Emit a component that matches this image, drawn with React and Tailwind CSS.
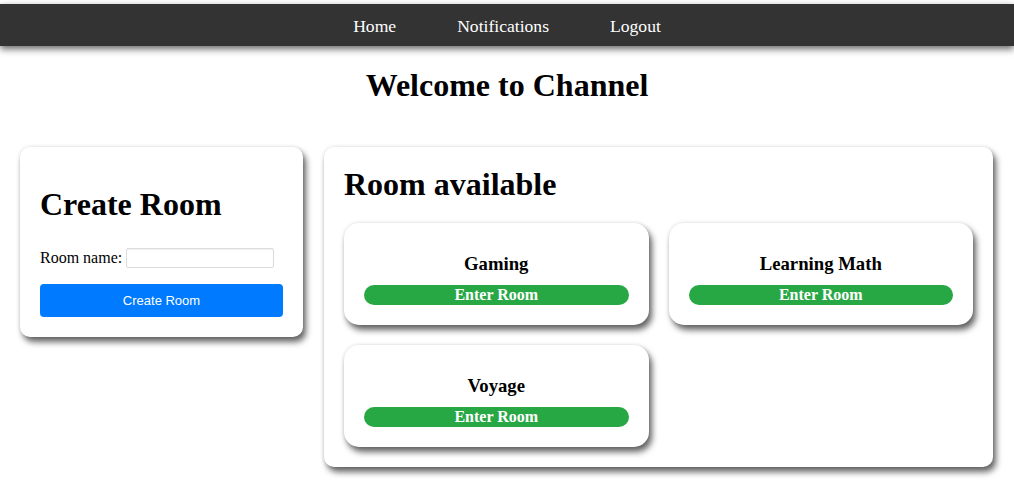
import React from "react";

const rooms = ["Gaming", "Learning Math", "Voyage"];

function RoomCard({ name }) {
  return (
    <div className="flex flex-col rounded-[15px] bg-white px-[20px] pt-[30px] pb-[20px] shadow-[0_0_4px_rgba(0,0,0,0.12),3px_5px_6px_rgba(0,0,0,0.6)]">
      <h3 className="mb-[10px] text-center text-[18.72px] font-bold leading-[22px] text-black">{name}</h3>
      <button className="h-[20px] w-full rounded-full bg-[#28a745] text-center text-[16px] font-bold leading-[20px] text-white">
        Enter Room
      </button>
    </div>
  );
}

export default function App() {
  return (
    <div className="min-h-[504px] bg-white pt-[4px] font-['Liberation_Serif','Times_New_Roman',serif] text-black">
      <nav className="flex h-[42px] items-center justify-center gap-[61px] bg-[#333333] pt-[2px] shadow-[0_3px_7px_rgba(0,0,0,0.6)]">
        <a className="text-[17.6px] text-white">Home</a>
        <a className="text-[17.6px] text-white">Notifications</a>
        <a className="text-[17.6px] text-white">Logout</a>
      </nav>
      <h1 className="mt-[21px] text-center text-[32px] font-bold leading-[37px]">Welcome to Channel</h1>
      <div className="mt-[43px] flex items-start gap-[21px] pl-[20px] pr-[21px]">
        <div className="flex w-[283px] shrink-0 flex-col rounded-[10px] bg-white px-[20px] pt-[20px] pb-[20px] shadow-[0_0_4px_rgba(0,0,0,0.12),3px_5px_6px_rgba(0,0,0,0.6)]">
          <h1 className="mt-[19px] text-[32px] font-bold leading-[37px]">Create Room</h1>
          <div className="mt-[25px] flex items-center gap-[4px]">
            <label className="text-[16px] leading-[18px]">Room name:</label>
            <input className="h-[20px] w-[148px] rounded-[2px] border border-[#dcdcdc] bg-white shadow-[inset_0_1px_1px_rgba(0,0,0,0.06)] outline-none" />
          </div>
          <button className="mt-[16px] h-[33px] w-full rounded-[4px] bg-[#007bff] font-['Liberation_Sans',Arial,sans-serif] text-[13px] text-white">
            Create Room
          </button>
        </div>
        <div className="flex flex-1 flex-col rounded-[10px] bg-white px-[20px] pt-[19px] pb-[20px] shadow-[0_0_4px_rgba(0,0,0,0.12),3px_5px_6px_rgba(0,0,0,0.6)]">
          <h2 className="text-[32px] font-bold leading-[37px]">Room available</h2>
          <div className="mt-[20px] grid grid-cols-2 gap-[20px]">
            {rooms.map((r) => (
              <RoomCard key={r} name={r} />
            ))}
          </div>
        </div>
      </div>
    </div>
  );
}
